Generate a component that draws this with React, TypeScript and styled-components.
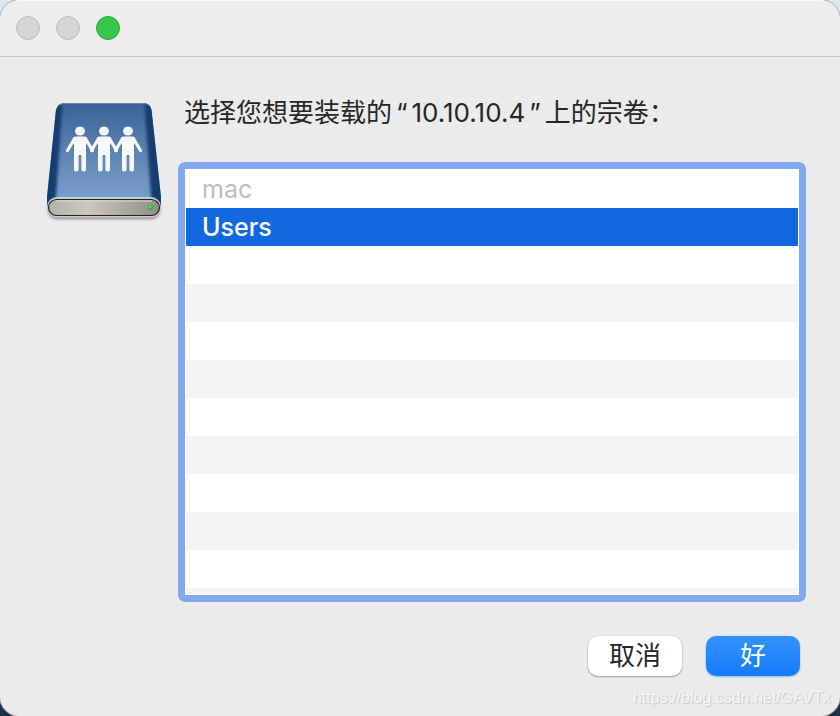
import React, { useState } from "react";
import styled, { createGlobalStyle } from "styled-components";

const GlobalStyle = createGlobalStyle`
  * { box-sizing: border-box; }
  body {
    margin: 0;
    font-family: Inter, "Noto Sans CJK SC", sans-serif;
    color: #262626;
  }
`;

const Desktop = styled.div`
  display: flex;
  min-height: 100vh;
  background: linear-gradient(#dfe6ec 0 50%, #17344a 50%);
`;

const Window = styled.main`
  position: relative;
  flex: 1;
  display: flex;
  flex-direction: column;
  border-radius: 20px;
  overflow: hidden;
  background: #ebebeb;
  box-shadow: 0 0 0 1px #a8a8a8;
`;

const TitleBar = styled.header`
  display: flex;
  gap: 16px;
  height: 57px;
  padding: 15px 16px;
  background: #eeeeee;
  border-top: 1px solid #fafafa;
  border-bottom: 1px solid #c6c6c6;
`;

const TrafficLight = styled.button<{ $color: string; $edge: string }>`
  width: 24px;
  height: 24px;
  padding: 0;
  border: 1px solid ${(p) => p.$edge};
  border-radius: 50%;
  background: ${(p) => p.$color};
`;

const Content = styled.form`
  flex: 1;
  display: flex;
  gap: 16px;
  padding: 40px 34px 40px 46px;
`;

const DriveIcon = styled.svg`
  flex: none;
  width: 116px;
  height: 126px;
`;

const Panel = styled.div`
  flex: 1;
  min-width: 0;
  display: flex;
  flex-direction: column;
`;

const Heading = styled.h1`
  margin: 0 0 33px;
  padding-left: 6px;
  font-size: 26px;
  line-height: 32px;
  font-weight: 400;
`;

const QuoteMark = styled.span`
  padding: 0 4px;
`;

const VolumeList = styled.fieldset`
  flex: 1;
  display: flex;
  flex-direction: column;
  margin: 0 0 34px;
  padding: 1px;
  border: 7px solid #80aaed;
  border-radius: 7px;
  background: #ffffff;
  overflow: hidden;
`;

const VolumeRow = styled.label<{ $selected: boolean; $disabled: boolean }>`
  position: relative;
  height: 38px;
  padding-left: 16px;
  font-size: 25px;
  line-height: 38px;
  font-weight: ${(p) => (p.$selected ? 500 : 400)};
  color: ${(p) => (p.$disabled ? "#bebebe" : p.$selected ? "#ffffff" : "#262626")};
  background: ${(p) => (p.$selected ? "#1268df" : "transparent")};
`;

const HiddenRadio = styled.input`
  position: absolute;
  opacity: 0;
  margin: 0;
`;

const EmptyRows = styled.div`
  flex: 1;
  background: repeating-linear-gradient(#ffffff 0 38px, #f4f4f4 38px 76px);
`;

const Actions = styled.div`
  display: flex;
  justify-content: flex-end;
  gap: 24px;
  padding-right: 6px;
`;

const Button = styled.button<{ $primary?: boolean }>`
  width: 94px;
  height: 40px;
  padding: 0;
  border: 0;
  border-radius: 10px;
  font: inherit;
  font-size: 26px;
  line-height: 38px;
  color: ${(p) => (p.$primary ? "#ffffff" : "#262626")};
  background: ${(p) => (p.$primary ? "linear-gradient(#3293fd, #157afb)" : "#ffffff")};
  box-shadow: 0 1px 2px ${(p) => (p.$primary ? "#157afb66" : "#00000055")}, 0 0 1px ${(p) => (p.$primary ? "#157afb66" : "#00000044")};
`;

const SourceNote = styled.small`
  position: absolute;
  right: 9px;
  bottom: 8px;
  font-family: "Liberation Sans", sans-serif;
  font-size: 16px;
  line-height: 20px;
  color: #f6f6f6;
  text-shadow: 1px 1px 1px #c6c6c6;
`;

const volumes = [
  { name: "mac", disabled: true },
  { name: "Users", disabled: false },
];

const lights = [
  { label: "关闭", color: "#d5d5d5", edge: "#bcbcbc" },
  { label: "最小化", color: "#d5d5d5", edge: "#bcbcbc" },
  { label: "缩放", color: "#35c84a", edge: "#2bac3b" },
];

const bodyOutline = "M19 6H97Q104 6 105.500 13L115 100V111H1V100L10 13Q12 6 19 6Z";

function Person({ x }: { x: number }) {
  return (
    <g transform={`translate(${x} 0)`} fill="#f8f9fb">
      <ellipse cx="0" cy="34" rx="5" ry="4.500" />
      <path d="M-6 42.500L-12.500 53.500M6 42.500L12.500 53.500" stroke="#f8f9fb" strokeWidth="3.200" strokeLinecap="round" />
      <path d="M-4.500 39.500H4.500Q7.500 39.500 7.500 43L6 48V72.500Q6 74.500 4.200 74.500H3Q1.400 74.500 1.400 72.500V58H-1.400V72.500Q-1.400 74.500-3 74.500H-4.200Q-6 74.500-6 72.500V48L-7.500 43Q-7.500 39.500-4.500 39.500Z" />
    </g>
  );
}

function SharedDrive() {
  return (
    <DriveIcon viewBox="0 0 116 126" aria-hidden="true">
      <defs>
        <linearGradient id="top" x2="0" y2="1">
          <stop offset="0" stopColor="#3b6197" />
          <stop offset=".5" stopColor="#5f85b5" />
          <stop offset="1" stopColor="#80a4d1" />
        </linearGradient>
        <linearGradient id="front">
          <stop offset="0" stopColor="#b2b1aa" />
          <stop offset=".35" stopColor="#c9c7c0" />
          <stop offset="1" stopColor="#8f8e82" />
        </linearGradient>
        <clipPath id="body">
          <path d={bodyOutline} />
        </clipPath>
        <filter id="soft" x="-20%" y="-50%" width="140%" height="200%">
          <feGaussianBlur stdDeviation="1.500" />
        </filter>
      </defs>
      <rect x="2" y="103" width="112" height="19" rx="9" fill="#555" opacity=".7" filter="url(#soft)" />
      <path d={bodyOutline} fill="url(#top)" />
      <g clipPath="url(#body)">
        <path d="M6 0H17L10 100V114H-4V100ZM98 0H110L120 100V114H105V100Z" fill="#173d70" filter="url(#soft)" />
        <path d="M13 8Q16 6.500 19 6.500H97Q100 6.500 103 8" fill="none" stroke="#6f8cb3" />
      </g>
      <rect x="1" y="100" width="114" height="20.500" rx="10" fill="#c8cbd0" />
      <rect x="2.500" y="102.500" width="111" height="16" rx="8" fill="url(#front)" stroke="#20242a" strokeWidth="1.200" />
      <path d="M10 104H106" stroke="#dedbd5" />
      <circle cx="104.700" cy="110.700" r="2.500" fill="#2eb834" stroke="#66a758" strokeWidth=".6" />
      <circle cx="104.300" cy="110" r="1" fill="#81ef70" />
      <Person x={34} />
      <Person x={58} />
      <Person x={82} />
    </DriveIcon>
  );
}

export default function App() {
  const [selected, setSelected] = useState("Users");
  return (
    <Desktop>
      <GlobalStyle />
      <Window>
        <TitleBar>
          {lights.map((l) => (
            <TrafficLight key={l.label} type="button" aria-label={l.label} $color={l.color} $edge={l.edge} />
          ))}
        </TitleBar>
        <Content onSubmit={(e) => e.preventDefault()}>
          <SharedDrive />
          <Panel>
            <Heading id="prompt">
              选择您想要装载的<QuoteMark>“</QuoteMark>10.10.10.4<QuoteMark>”</QuoteMark>上的宗卷：
            </Heading>
            <VolumeList aria-labelledby="prompt">
              {volumes.map((v) => (
                <VolumeRow key={v.name} $selected={v.name === selected} $disabled={v.disabled}>
                  <HiddenRadio
                    type="radio"
                    name="volume"
                    value={v.name}
                    disabled={v.disabled}
                    checked={v.name === selected}
                    onChange={() => setSelected(v.name)}
                  />
                  {v.name}
                </VolumeRow>
              ))}
              <EmptyRows />
            </VolumeList>
            <Actions>
              <Button type="button">取消</Button>
              <Button type="submit" $primary>好</Button>
            </Actions>
          </Panel>
        </Content>
        <SourceNote>https://blog.csdn.net/GAVTx</SourceNote>
      </Window>
    </Desktop>
  );
}
